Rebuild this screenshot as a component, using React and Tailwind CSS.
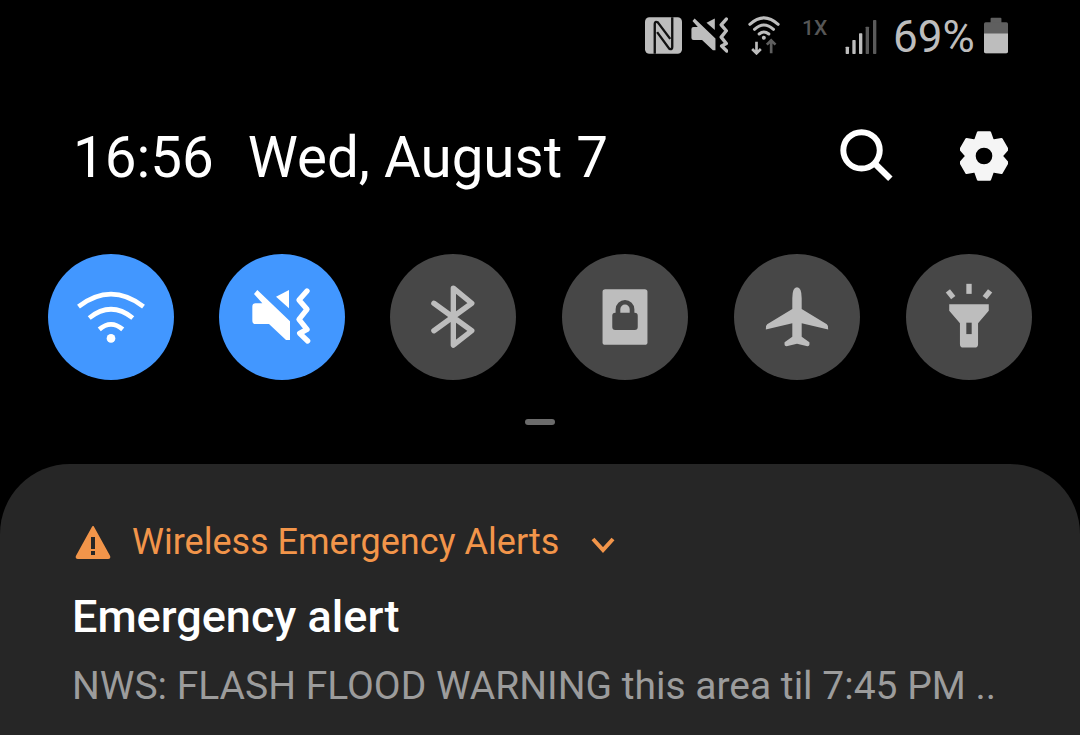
const gearPath = (() => {
  const cx = 492, cy = 106, pts = [];
  for (let i = 0; i < 6; i++) {
    const a = i * 60 - 90;
    [[53, a - 30], [73, a - 14], [73, a + 14]].forEach(([r, d]) => {
      const t = (d * Math.PI) / 180;
      pts.push(`${(cx + r * Math.cos(t)).toFixed(1)} ${(cy + r * Math.sin(t)).toFixed(1)}`);
    });
  }
  return "M" + pts.join("L") + "Z";
})();

const LIGHT = "#bdbdbd";
const DARK = "#474747";

const MuteShape = ({ color }) => (
  <g>
    <path d="M37 30L27 42L52 70L32 70Q22 70 22 80L22 122Q22 132 32 132L72 132L123 180L135 180L135 124Z" fill={color} />
    <path d="M132 30L132 85L93 50Z" fill={color} />
    <path d="M186 33L162 60L186 88L162 118L186 148L164 160L188 183" fill="none" stroke={color} strokeWidth="16" strokeLinejoin="round" strokeLinecap="round" />
  </g>
);

const Toggle = ({ active, box, className, children }) => (
  <div className={`w-[126px] h-[126px] rounded-full ${active ? "bg-[#4297ff]" : "bg-[#474747]"} ${className ?? ""}`}>
    <svg viewBox={box} className="w-full h-full">{children}</svg>
  </div>
);

export default function App() {
  return (
    <div className="w-[1080px] h-[735px] bg-black overflow-hidden flex flex-col font-['Roboto',sans-serif]">
      <div className="h-[70px] flex items-start justify-end pr-[72px] pt-[15px] shrink-0">
        <svg viewBox="0 0 110 108" className="w-[37px] h-[37px] mt-[2px]">
          <rect width="110" height="108" rx="13" fill={LIGHT} />
          <path d="M29 108V20Q29 10 38 15L75 64M81 0V88Q81 98 72 93L36 44" fill="none" stroke="#111" strokeWidth="7" />
        </svg>
        <svg viewBox="20 28 174 160" className="w-[37px] h-[36px] ml-[9px] mt-[2px]"><MuteShape color={LIGHT} /></svg>
        <svg viewBox="355 45 95 120" className="w-[32px] h-[40px] ml-[20px]">
          <g fill="none" stroke={LIGHT} strokeLinecap="round">
            <path d="M360 73Q402 34 445 73" strokeWidth="9" />
            <path d="M374 88Q402 62 431 88" strokeWidth="9" />
            <path d="M388 102Q402 90 417 102" strokeWidth="9" />
          </g>
          <circle cx="402" cy="113" r="6" fill={LIGHT} />
          <path d="M380 125V160M367 147L380 160L393 147" fill="none" stroke={LIGHT} strokeWidth="8" />
          <path d="M424 160V122M411 134L424 121L437 134" fill="none" stroke="#5f5f5f" strokeWidth="8" />
        </svg>
        <span className="ml-[22px] w-[25px] mt-[1px] text-[21px] leading-[24px] font-medium text-[#565656]">1X</span>
        <svg viewBox="648 58 92 102" className="w-[32px] h-[34px] ml-[18px] mt-[5px]">
          <rect x="648" y="138" width="10" height="22" rx="2" fill={LIGHT} />
          <rect x="668" y="118" width="10" height="42" rx="2" fill={LIGHT} />
          <rect x="688" y="98" width="10" height="62" rx="2" fill={LIGHT} />
          <rect x="708" y="78" width="10" height="82" rx="2" fill="#5a5a5a" />
          <rect x="730" y="58" width="10" height="102" rx="2" fill="#5a5a5a" />
        </svg>
        <span className="ml-[16px] w-[81px] text-[44px] leading-[44px] text-[#bdbdbd] whitespace-nowrap">69%</span>
        <svg viewBox="1062 52 73 108" className="w-[24px] h-[37px] ml-[10px] mt-[2px]">
          <rect x="1082" y="52" width="33" height="20" rx="3" fill="#5f5f5f" />
          <rect x="1062" y="66" width="73" height="94" rx="5" fill="#5f5f5f" />
          <path d="M1062 100H1135V155Q1135 160 1130 160H1067Q1062 160 1062 155Z" fill={LIGHT} />
        </svg>
      </div>

      <div className="h-[184px] flex items-start pl-[73px] pr-[72px] pt-[53px] shrink-0 text-white">
        <span className="text-[56.5px] leading-[70px] whitespace-nowrap">16:56</span>
        <span className="ml-[34px] text-[56.5px] leading-[70px] whitespace-nowrap">Wed, August 7</span>
        <svg viewBox="60 25 160 162" className="w-[53px] h-[54px] ml-auto mt-[5px]">
          <circle cx="125" cy="92" r="55" fill="none" stroke="#fff" strokeWidth="18" />
          <path d="M168 135L212 178" stroke="#fff" strokeWidth="19" />
        </svg>
        <svg viewBox="420 28 144 156" className="w-[48px] h-[52px] ml-[67px] mt-[7px]">
          <path d={gearPath} fill="#f5f5f5" stroke="#f5f5f5" strokeWidth="7" strokeLinejoin="round" />
          <circle cx="492" cy="106" r="25" fill="#000" />
        </svg>
      </div>

      <div className="flex gap-[45px] pl-[48px] shrink-0">
        <Toggle active box="55 43 376 376">
          <g fill="none" stroke="#fff" strokeWidth="14">
            <path d="M146 200Q243 126 340 200" />
            <path d="M178 234Q243 182 308 234" />
            <path d="M208 268Q243 238 278 268" />
          </g>
          <circle cx="243" cy="295" r="13" fill="#fff" />
        </Toggle>
        <Toggle active box="-78 -78 378 378"><MuteShape color="#fff" /></Toggle>
        <Toggle box="1081 43 376 376">
          <path d="M1212 190L1325 272L1270 315V145L1325 190L1212 272" fill="none" stroke={LIGHT} strokeWidth="16" strokeLinejoin="round" strokeLinecap="round" />
        </Toggle>
        <Toggle className="ml-px" box="37 43 376 376">
          <rect x="158" y="148" width="134" height="166" rx="8" fill={LIGHT} />
          <rect x="187" y="218" width="76" height="52" rx="9" fill={DARK} />
          <path d="M204 222V208A21 21 0 0 1 246 208V222" fill="none" stroke={DARK} strokeWidth="14" />
        </Toggle>
        <Toggle className="ml-px" box="553 43 376 376">
          <path d="M741 142Q755 142 755 175V207L830 253Q836 258 834 268L755 250V290L778 306Q780 318 772 318L741 311L710 318Q702 318 704 306L727 290V250L648 268Q646 258 652 253L727 207V175Q727 142 741 142Z" fill={LIGHT} />
        </Toggle>
        <Toggle className="ml-px" box="1069 43 376 376">
          <rect x="1249" y="132" width="16" height="30" fill={LIGHT} />
          <rect x="1194" y="150" width="16" height="26" fill={LIGHT} transform="rotate(-38 1202 163)" />
          <rect x="1304" y="150" width="16" height="26" fill={LIGHT} transform="rotate(38 1312 163)" />
          <path d="M1198 193H1316V212L1284 250V312Q1284 322 1274 322H1240Q1230 322 1230 312V250L1198 212Z" fill={LIGHT} />
          <rect x="1249" y="248" width="16" height="34" fill={DARK} />
        </Toggle>
      </div>

      <div className="flex justify-center pt-[39px] pb-[39px] shrink-0">
        <div className="w-[30px] h-[6px] rounded-full bg-[#6b6b6b]" />
      </div>

      <div className="flex-1 bg-[#262626] rounded-t-[70px] pl-[72px] pt-[56px] overflow-hidden">
        <div className="flex items-center h-[44px] text-[#f2954a]">
          <svg viewBox="0 0 36 34" className="w-[36px] h-[34px] ml-[3px]">
            <path d="M18 2L34 31Q35 33 33 33H3Q1 33 2 31Z" fill="#f2954a" stroke="#f2954a" strokeWidth="2" strokeLinejoin="round" />
            <rect x="16" y="12" width="4" height="12" fill="#262626" />
            <rect x="16" y="26" width="4" height="4" fill="#262626" />
          </svg>
          <span className="ml-[21px] text-[36px] leading-[44px] whitespace-nowrap">Wireless Emergency Alerts</span>
          <svg viewBox="0 0 24 16" className="w-[24px] h-[16px] ml-[32px] mt-[6px]">
            <path d="M2 2L12 13L22 2" fill="none" stroke="#f2954a" strokeWidth="4" />
          </svg>
        </div>
        <div className="text-white text-[45px] leading-[50px] font-medium mt-[28px] whitespace-nowrap">Emergency alert</div>
        <div className="text-[#9c9c9c] text-[39px] leading-[50px] mt-[19px] whitespace-nowrap">NWS: FLASH FLOOD WARNING this area til 7:45 PM ..</div>
      </div>
    </div>
  );
}
